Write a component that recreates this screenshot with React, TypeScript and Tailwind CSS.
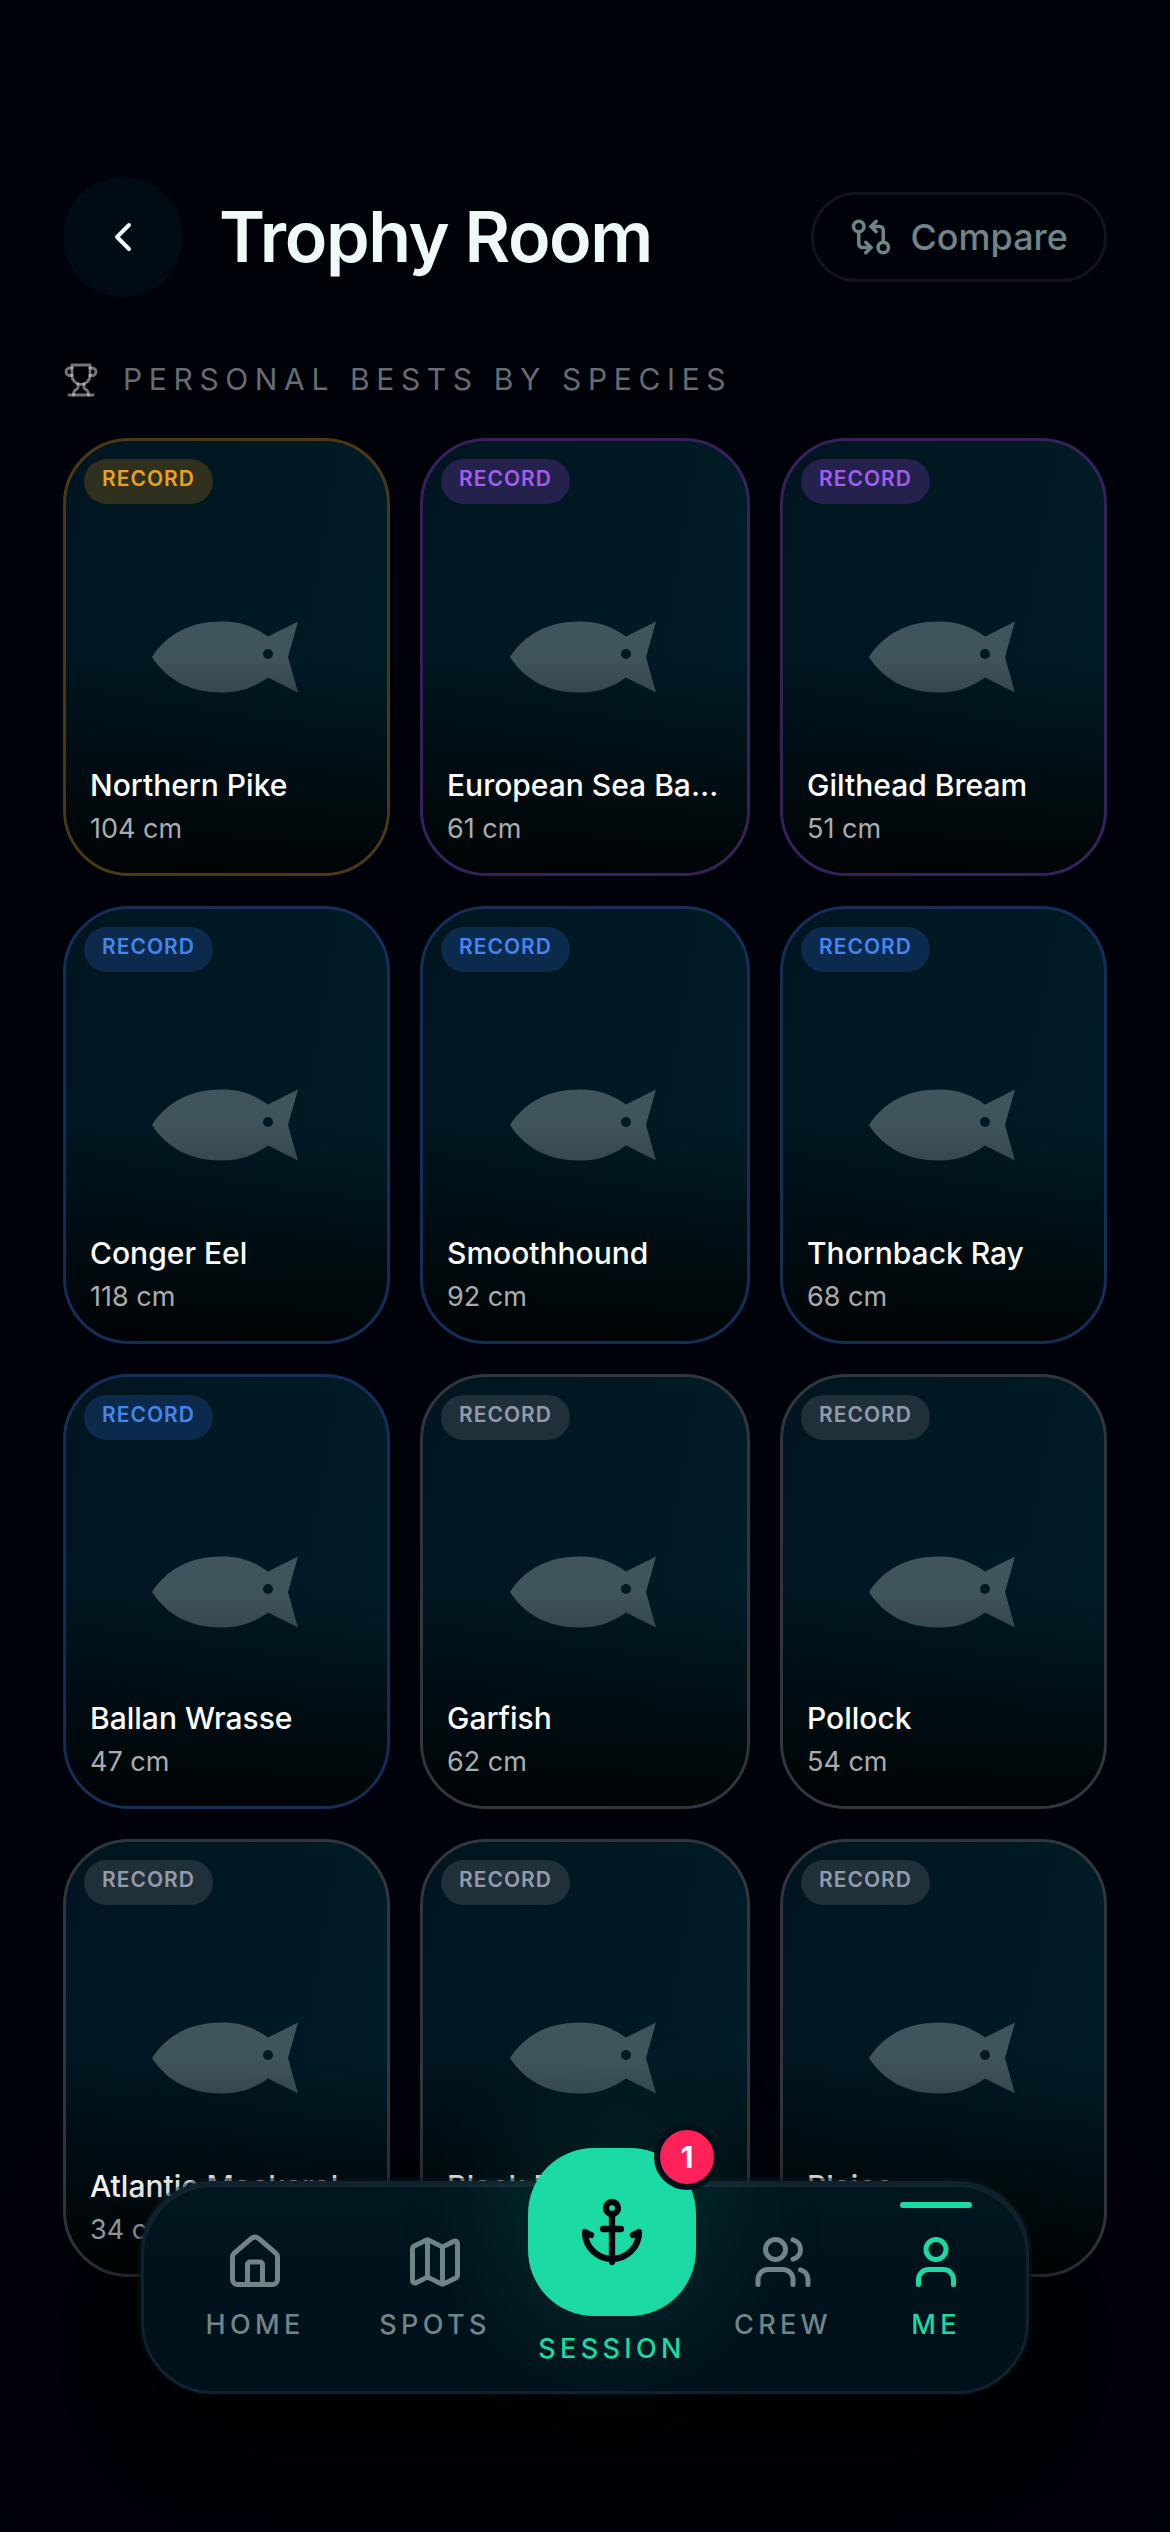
import React from 'react';
import { Anchor, ChevronLeft, GitCompareArrows, House, Map, User, Users } from 'lucide-react';

type Tier = 'gold' | 'purple' | 'blue' | 'gray';

interface Catch {
  species: string;
  size: string;
  tier: Tier;
}

const catches: Catch[] = [
  { species: 'Northern Pike', size: '104 cm', tier: 'gold' },
  { species: 'European Sea Bass', size: '61 cm', tier: 'purple' },
  { species: 'Gilthead Bream', size: '51 cm', tier: 'purple' },
  { species: 'Conger Eel', size: '118 cm', tier: 'blue' },
  { species: 'Smoothhound', size: '92 cm', tier: 'blue' },
  { species: 'Thornback Ray', size: '68 cm', tier: 'blue' },
  { species: 'Ballan Wrasse', size: '47 cm', tier: 'blue' },
  { species: 'Garfish', size: '62 cm', tier: 'gray' },
  { species: 'Pollock', size: '54 cm', tier: 'gray' },
  { species: 'Atlantic Mackerel', size: '34 cm', tier: 'gray' },
  { species: 'Black Bream', size: '33 cm', tier: 'gray' },
  { species: 'Plaice', size: '31 cm', tier: 'gray' }
];

// Border and badge colours per tier
const tierStyles: Record<Tier, { border: string; badge: string }> = {
  gold: { border: 'border-[#4d3815]', badge: 'bg-[#2f301e] text-[#e9a120]' },
  purple: { border: 'border-[#38205a]', badge: 'bg-[#24224d] text-[#a25ded]' },
  blue: { border: 'border-[#152e59]', badge: 'bg-[#0c2a4b] text-[#4286ee]' },
  gray: { border: 'border-[#31353d]', badge: 'bg-[#20303b] text-[#949ba8]' }
};

function Fish() {
  return (
    <svg viewBox="0 0 146 72" className="mr-1 h-[72px] w-[146px]">
      <path
        d="M0 36C15 13 38 0.5 70 0.5C88 0.5 101 5 116 15.5L146 0.5L136 36L146 71.5L116 56.5C101 67 88 71.5 70 71.5C38 71.5 15 59 0 36Z"
        className="fill-[#40545b]"
      />
      <circle cx="116" cy="33" r="5" className="fill-[#001a24]" />
    </svg>
  );
}

function TrophyIcon() {
  return (
    <svg
      viewBox="0 0 24 24"
      fill="none"
      strokeWidth={1.9}
      strokeLinecap="round"
      strokeLinejoin="round"
      className="size-9 stroke-white/45"
    >
      <path d="M6 9H4.5a2.5 2.5 0 0 1 0-5H6" />
      <path d="M18 9h1.5a2.5 2.5 0 0 0 0-5H18" />
      <path d="M4 22h16" />
      <path d="M10 14.66V17c0 .55-.47.98-.97 1.21C7.85 18.75 7 20.24 7 22" />
      <path d="M14 14.66V17c0 .55.47.98.97 1.21C16.15 18.75 17 20.24 17 22" />
      <path d="M18 2H6v7a6 6 0 0 0 12 0V2Z" />
    </svg>
  );
}

function TrophyCard({ item }: { item: Catch }) {
  const tier = tierStyles[item.tier];

  return (
    <div
      className={`relative flex flex-col justify-end overflow-hidden rounded-[66px] border-3 bg-linear-100 from-[#00151f] to-[#001d27] ${tier.border}`}
    >
      <div className="absolute inset-0 flex items-center justify-center">
        <Fish />
      </div>
      <div className="absolute inset-x-0 bottom-0 h-1/2 bg-linear-to-t from-black/85 via-black/45 to-transparent" />

      <span
        className={`absolute top-[18px] left-[18px] flex h-[45px] w-[129px] items-center justify-center rounded-full pb-1.5 text-[21px] font-semibold tracking-[0.05em] ${tier.badge}`}
      >
        RECORD
      </span>

      <div className="relative px-6 pb-6">
        <p className="truncate text-[30px] leading-[45px] font-medium text-white">{item.species}</p>
        <p className="text-[27px] leading-[41px] text-[#a9adaf]">{item.size}</p>
      </div>
    </div>
  );
}

interface NavItemProps {
  icon: React.ElementType;
  label: string;
  active?: boolean;
}

function NavItem({ icon: Icon, label, active }: NavItemProps) {
  return (
    <div className={`relative flex flex-col items-center pt-12 ${active ? 'text-[#1cdaa4]' : 'text-[#6f8588]'}`}>
      {active && <span className="absolute top-[18px] h-1.5 w-[72px] rounded-full bg-[#1cdaa4]" />}
      <Icon size={60} strokeWidth={2} />
      <span className="mt-[13px] text-[27px] leading-[40px] font-medium tracking-[0.16em]">{label}</span>
    </div>
  );
}

export default function App() {
  return (
    <div className="relative h-[2532px] w-[1170px] overflow-hidden bg-[#00020a] px-[63px] pt-[177px] font-[Inter,sans-serif]">
      <header className="flex h-[120px] items-center">
        <button className="flex size-[120px] items-center justify-center rounded-full bg-[#000b14] text-[#eefaf9]">
          <ChevronLeft size={48} strokeWidth={2} />
        </button>
        <h1 className="ml-9 text-[70px] leading-none font-semibold tracking-[-0.02em] text-[#eefaf9]">Trophy Room</h1>
        <button className="ml-auto flex h-[90px] items-center gap-[18px] rounded-full border-3 border-[#0c161c] px-9 text-4xl font-medium text-[#6f8588]">
          <GitCompareArrows size={42} />
          Compare
        </button>
      </header>

      <div className="mt-[60px] flex h-[45px] items-center gap-6">
        <TrophyIcon />
        <h2 className="text-[30px] tracking-[0.221em] text-[#676c70]">PERSONAL BESTS BY SPECIES</h2>
      </div>

      <main className="mt-9 grid grid-cols-[327px_330px_327px] grid-rows-[438px_438px_435px_438px] gap-[30px]">
        {catches.map((item) => (
          <TrophyCard key={item.species} item={item} />
        ))}
      </main>

      {/* Floating tab bar */}
      <nav className="absolute top-[2181px] left-[141px] grid h-[213px] w-[888px] grid-cols-[222px_138px_216px_126px_180px] rounded-[72px] border-3 border-[#10222b] bg-linear-to-b from-[#02171f] via-[#00121c] to-[#00111b] shadow-[0_60px_120px_20px_rgba(0,0,0,0.8),0_0_0_3px_rgba(16,30,38,0.5),inset_0_3px_0_#12252e]">
        <NavItem icon={House} label="HOME" />
        <NavItem icon={Map} label="SPOTS" />
        <div className="relative mt-[-36px] flex flex-col items-center">
          <div className="relative flex size-[168px] items-center justify-center rounded-[66px] bg-[#1cdaa4] text-[#00060d] shadow-[0_0_120px_24px_rgba(31,216,164,0.12)]">
            <Anchor size={72} strokeWidth={2.1} />
            <span className="absolute -top-6 -right-6 flex size-[66px] items-center justify-center rounded-full border-6 border-[#00111b] bg-[#ff2157] text-[30px] font-bold text-white">
              1
            </span>
          </div>
          <span className="mt-3 text-[27px] leading-[41px] font-medium tracking-[0.16em] text-[#1cdaa4]">SESSION</span>
        </div>
        <NavItem icon={Users} label="CREW" />
        <NavItem icon={User} label="ME" active />
      </nav>
    </div>
  );
}
